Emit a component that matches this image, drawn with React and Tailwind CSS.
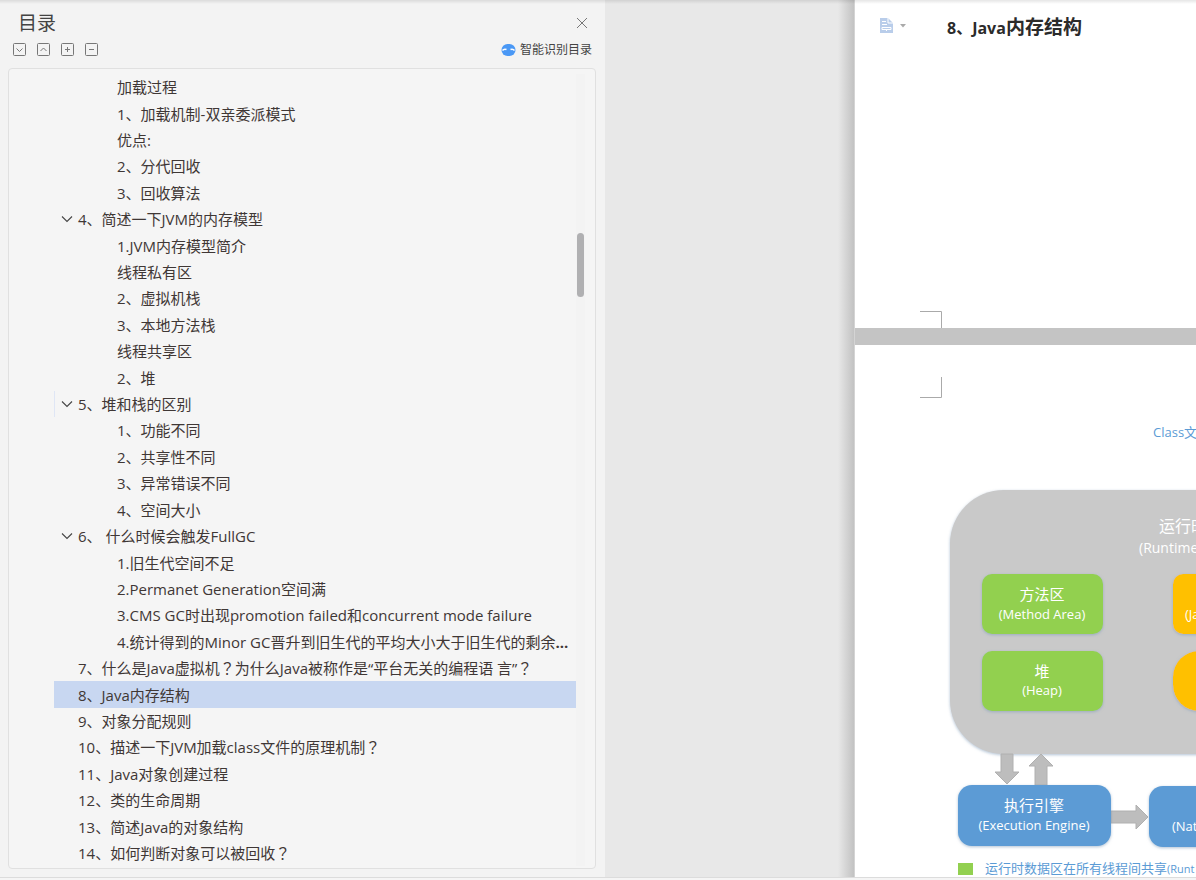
import React from 'react';

const outline = [
    { level: 2, text: '加载过程' },
    { level: 2, text: '1、加载机制-双亲委派模式' },
    { level: 2, text: '优点:' },
    { level: 2, text: '2、分代回收' },
    { level: 2, text: '3、回收算法' },
    { level: 1, text: '4、简述一下JVM的内存模型', open: true },
    { level: 2, text: '1.JVM内存模型简介' },
    { level: 2, text: '线程私有区' },
    { level: 2, text: '2、虚拟机栈' },
    { level: 2, text: '3、本地方法栈' },
    { level: 2, text: '线程共享区' },
    { level: 2, text: '2、堆' },
    { level: 1, text: '5、堆和栈的区别', open: true, marked: true },
    { level: 2, text: '1、功能不同' },
    { level: 2, text: '2、共享性不同' },
    { level: 2, text: '3、异常错误不同' },
    { level: 2, text: '4、空间大小' },
    { level: 1, text: '6、 什么时候会触发FullGC', open: true },
    { level: 2, text: '1.旧生代空间不足' },
    { level: 2, text: '2.Permanet Generation空间满' },
    { level: 2, text: '3.CMS GC时出现promotion failed和concurrent mode failure' },
    { level: 2, text: '4.统计得到的Minor GC晋升到旧生代的平均大小大于旧生代的剩余', more: true },
    { level: 1, text: '7、什么是Java虚拟机？为什么Java被称作是“平台无关的编程语 言”？' },
    { level: 1, text: '8、Java内存结构', active: true },
    { level: 1, text: '9、对象分配规则' },
    { level: 1, text: '10、描述一下JVM加载class文件的原理机制？' },
    { level: 1, text: '11、Java对象创建过程' },
    { level: 1, text: '12、类的生命周期' },
    { level: 1, text: '13、简述Java的对象结构' },
    { level: 1, text: '14、如何判断对象可以被回收？' },
];

const tools = [
    { label: '展开', d: 'M4.500 5.500l3 3 3-3' },
    { label: '收起', d: 'M4.500 8l3-3 3 3' },
    { label: '增加级别', d: 'M5 6.500h5M7.500 4v5' },
    { label: '减少级别', d: 'M5 6.500h5' },
];

// The TC face centres the question mark in its cell
const Label = ({ text }) =>
    text.split(/(？)/).map((part, idx) =>
        part === '？' ? (
            <span key={idx} className="font-['Noto_Sans_CJK_TC',sans-serif] leading-none">
                {part}
            </span>
        ) : (
            part
        )
    );

const OutlineRow = ({ item }) => (
    <li className="flex min-h-0 flex-1">
        <button
            type="button"
            aria-current={item.active ? 'true' : undefined}
            className={`flex w-full items-center border-l whitespace-nowrap text-left ${
                item.active ? 'bg-[#c8d7f1]' : ''
            } ${item.marked ? 'border-[#dfe6f5]' : 'border-transparent'} ${item.level === 2 ? 'pl-[62px]' : 'pl-1'}`}
        >
            {item.level === 1 && (
                <span className="flex w-[19px] shrink-0 pl-[2px]">
                    {item.open && (
                        <svg width="12" height="8" viewBox="0 0 12 8" fill="none" stroke="#444" strokeWidth="1.1" aria-hidden="true">
                            <path d="M1 1.5l5 5 5-5" />
                        </svg>
                    )}
                </span>
            )}
            <span>
                <Label text={item.text} />
            </span>
            {item.more && <span className="font-bold">...</span>}
        </button>
    </li>
);

const Sidebar = () => (
    <aside className="flex w-[605px] shrink-0 flex-col bg-[#f3f3f3] pr-[9px] pb-2 pl-2">
        <header className="flex items-center justify-between pt-[10px] pr-2 pl-[10px]">
            <h1 className="text-[19px] leading-[26px] text-[#444]">目录</h1>
            <button type="button" aria-label="关闭">
                <svg width="12" height="12" viewBox="0 0 12 12" stroke="#777" strokeWidth="1" aria-hidden="true">
                    <path d="M1 1l10 10M11 1L1 11" />
                </svg>
            </button>
        </header>
        <div className="flex h-8 items-center justify-between pr-1 pb-1 pl-1">
            <div className="flex gap-[10px]">
                {tools.map((tool) => (
                    <button key={tool.label} type="button" aria-label={tool.label}>
                        <svg width="14" height="14" viewBox="0 0 14 14" fill="none" stroke="#777" strokeWidth="1" aria-hidden="true">
                            <rect x="1.5" y="0.5" width="12" height="12" rx="1" />
                            <path d={tool.d} />
                        </svg>
                    </button>
                ))}
            </div>
            <button type="button" className="flex items-center gap-1 text-[12px] leading-4 text-[#444]">
                <svg width="15" height="12" viewBox="0 0 15 12" aria-hidden="true">
                    <rect x="0.5" y="0" width="14" height="12" rx="6" fill="#4a98f5" />
                    <path d="M1.500 6.500q1.500-2 4-1M9.500 5.500q2.500-1 4 1" fill="none" stroke="#fff" strokeWidth="1.4" />
                </svg>
                智能识别目录
            </button>
        </div>
        <nav aria-label="目录" className="flex min-h-0 flex-1 rounded border border-[#e0e0e0] bg-[#f5f5f5] pt-[5px] pb-[2px]">
            <ul className="ml-[45px] flex min-w-0 flex-1 flex-col text-[15px] leading-5 text-[#3f3735]">
                {outline.map((item) => (
                    <OutlineRow key={item.text} item={item} />
                ))}
            </ul>
            <div className="mr-[10px] w-[9px] bg-[#f3f3f3] pt-[159px] pl-px">
                <div className="h-16 w-[7px] rounded-full bg-[#b0b0b2]" />
            </div>
        </nav>
    </aside>
);

const Diagram = () => (
    <svg
        className="block h-[532px] w-full font-['Open_Sans','Noto_Sans_CJK_SC',sans-serif]"
        fontSize="13"
        fill="#fff"
        textAnchor="middle"
        role="img"
        aria-label="Java内存结构"
    >
        <defs>
            <filter id="soft" x="-10%" y="-10%" width="120%" height="130%">
                <feDropShadow dx="0" dy="1" stdDeviation="1.5" floodColor="#7c9ab8" floodOpacity="0.6" />
            </filter>
        </defs>
        <path d="M65 52.500h21.500V32" fill="none" stroke="#aaa" />
        <text x="298" y="92" fill="#5b9bd5" textAnchor="start">Class文</text>

        <rect x="95" y="145" width="640" height="264" rx="54" fill="#c9c9c9" filter="url(#soft)" />
        <text x="304" y="187" fontSize="16" textAnchor="start">运行时</text>
        <text x="284" y="208" fontSize="14" textAnchor="start">(Runtime</text>

        <g filter="url(#soft)">
            <rect x="127" y="229" width="121" height="60" rx="10" fill="#92d050" />
            <rect x="127" y="306" width="121" height="60" rx="10" fill="#92d050" />
            <rect x="318" y="229" width="121" height="60" rx="10" fill="#ffc000" />
            <rect x="318" y="306" width="121" height="60" rx="26" fill="#ffc000" />
        </g>
        <text x="187" y="255" fontSize="15">方法区</text>
        <text x="187" y="274">(Method Area)</text>
        <text x="187" y="332" fontSize="15">堆</text>
        <text x="187" y="350">(Heap)</text>
        <text x="330" y="274" textAnchor="start">(Ja</text>

        <g fill="#bdbdbd" stroke="#b0b0b0">
            <path d="M146 409h12v18h6l-12 12-12-12h6z" />
            <path d="M180 440v-19h-6l12-12 12 12h-6v19z" />
            <path d="M256 466h25v-6l12 12-12 12v-6h-25z" />
        </g>
        <g filter="url(#soft)" fill="#5b9bd5">
            <rect x="103" y="440" width="153" height="61" rx="14" />
            <rect x="294" y="441" width="153" height="61" rx="14" />
        </g>
        <text x="179" y="466" fontSize="15">执行引擎</text>
        <text x="179" y="485">(Execution Engine)</text>
        <text x="317" y="486" textAnchor="start">(Nat</text>

        <rect x="103" y="518" width="15" height="12" fill="#92d050" />
        <text x="130" y="528" fill="#5b9bd5" textAnchor="start">
            运行时数据区在所有线程间共享<tspan fontSize="11">(Runt</tspan>
        </text>
    </svg>
);

const Document = () => (
    <main className="flex min-w-0 flex-1 bg-[#e8e8e8] pl-[233px]">
        <div className="w-4 shrink-0 bg-linear-to-r from-[#e8e8e8] to-[#c2c2c2]" />
        <div className="flex min-w-0 flex-1 flex-col overflow-hidden border-l border-[#d4d4d4] bg-[#c4c4c4]">
            <section className="flex h-[328px] shrink-0 flex-col justify-between bg-white">
                <div className="flex items-start pt-[14px] pl-[25px]">
                    <button type="button" aria-label="段落" className="mt-1 flex items-center gap-[7px]">
                        <svg width="13" height="15" viewBox="0 0 13 15" aria-hidden="true">
                            <path d="M0 0h8l5 5v10H0z" fill="#b9cdea" />
                            <path d="M8 0v5h5M2 3.500h4M2 6.500h5M2 9.500h9v2H2zM6.500 12v1" fill="none" stroke="#fff" />
                        </svg>
                        <svg width="6" height="4" viewBox="0 0 6 4" aria-hidden="true">
                            <path d="M0 0h6L3 3.500z" fill="#aaa" />
                        </svg>
                    </button>
                    <h2 className="pl-[41px] text-[19px] leading-[26px] font-bold whitespace-nowrap text-[#2b2b2b]">
                        <span className="text-[16px]">8、Java</span>内存结构
                    </h2>
                </div>
                <svg className="ml-[65px]" width="22" height="17" fill="none" stroke="#aaa" aria-hidden="true">
                    <path d="M0 .5h21.500V17" />
                </svg>
            </section>
            <section className="mt-[17px] flex-1 bg-white">
                <Diagram />
            </section>
        </div>
    </main>
);

const App = () => (
    <div className="relative flex h-screen min-h-[700px] flex-col overflow-hidden bg-[#f3f3f3] font-['Open_Sans','Noto_Sans_CJK_SC',sans-serif]">
        <div className="flex min-h-0 flex-1">
            <Sidebar />
            <Document />
        </div>
        <footer className="h-[3px] shrink-0 border-t border-[#dcdcdc] bg-[#f5f5f5]" />
        <div className="pointer-events-none absolute inset-x-0 top-0 h-1 bg-linear-to-b from-black/10 to-transparent" />
    </div>
);

export default App;
